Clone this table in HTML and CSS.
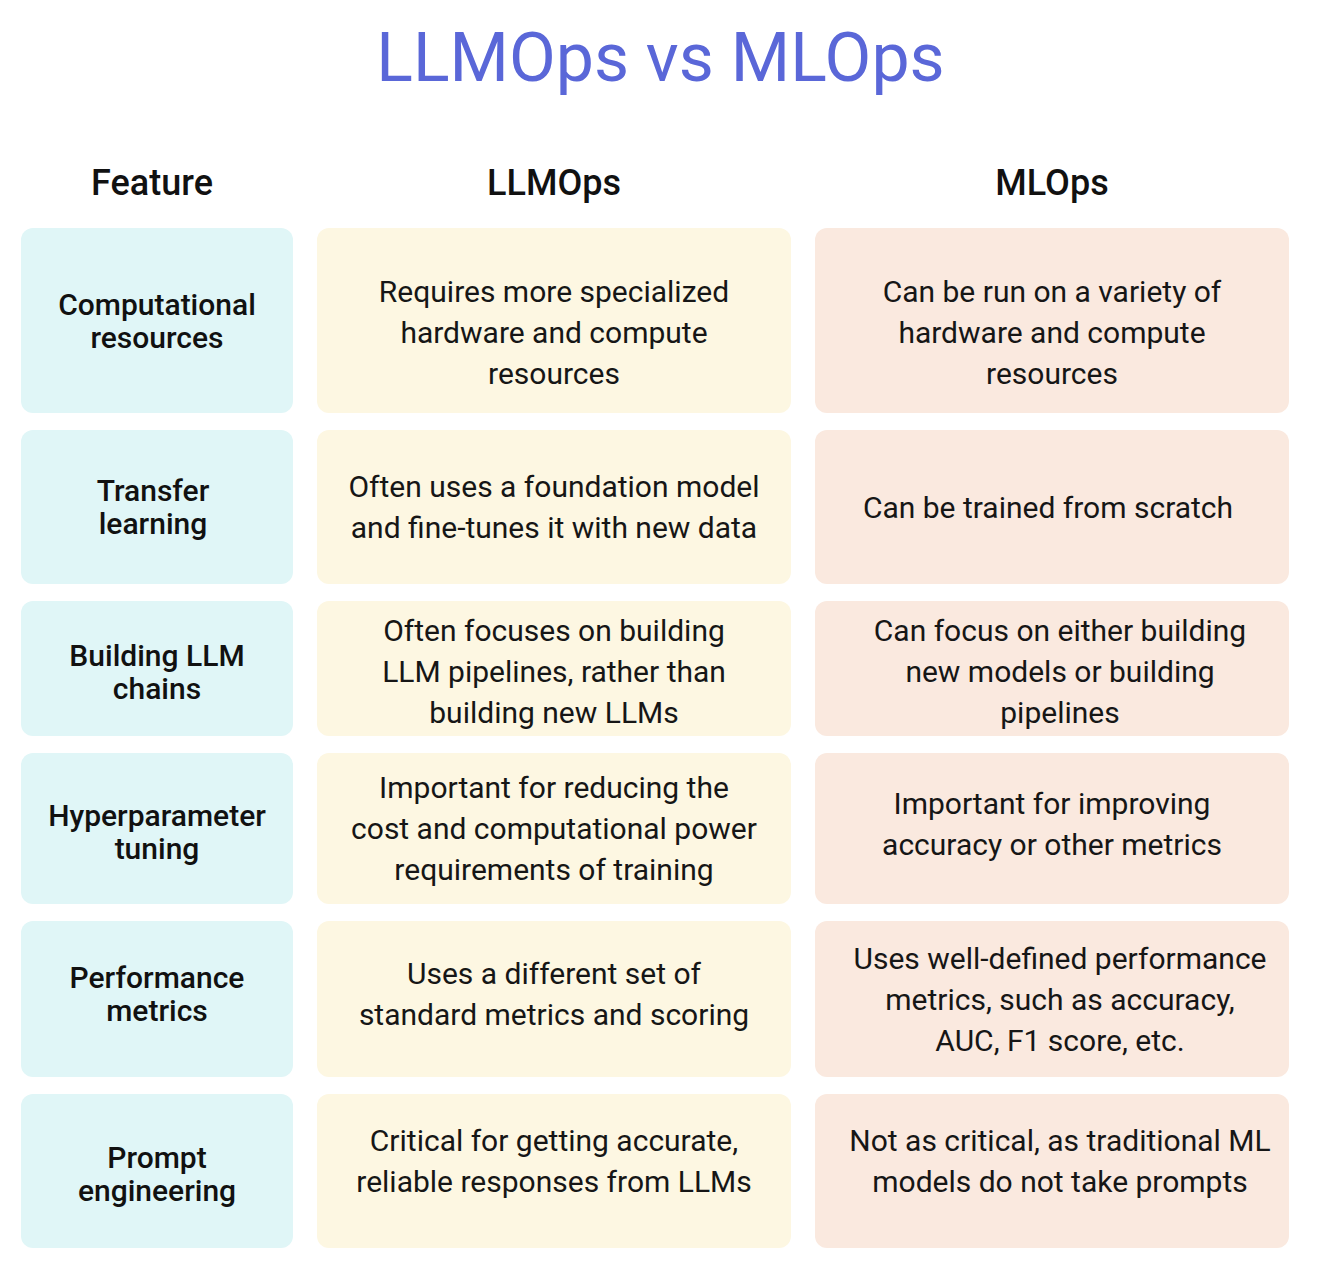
FILE: index.html
```html
<!DOCTYPE html>
<html lang="en">
<head>
<meta charset="utf-8">
<title>LLMOps vs MLOps</title>
<link rel="stylesheet" href="styles.css">
</head>
<body>
<main class="page">
  <h1 class="title">LLMOps vs MLOps</h1>
  <div class="heads">
    <div class="head head-feature">Feature</div>
    <div class="head">LLMOps</div>
    <div class="head">MLOps</div>
  </div>
  <div class="table">
    <div class="cell feature">Computational<br>resources</div>
    <div class="cell llm lower">Requires more specialized<br>hardware and compute<br>resources</div>
    <div class="cell ml lower">Can be run on a variety of<br>hardware and compute<br>resources</div>

    <div class="cell feature nudge-left">Transfer<br>learning</div>
    <div class="cell llm">Often uses a foundation model<br>and fine-tunes it with new data</div>
    <div class="cell ml nudge-left">Can be trained from scratch</div>

    <div class="cell feature nudge-down">Building LLM<br>chains</div>
    <div class="cell llm nudge-down">Often focuses on building<br>LLM pipelines, rather than<br>building new LLMs</div>
    <div class="cell ml nudge-down nudge-right">Can focus on either building<br>new models or building<br>pipelines</div>

    <div class="cell feature nudge-down">Hyperparameter<br>tuning</div>
    <div class="cell llm">Important for reducing the<br>cost and computational power<br>requirements of training</div>
    <div class="cell ml nudge-up">Important for improving<br>accuracy or other metrics</div>

    <div class="cell feature nudge-up">Performance<br>metrics</div>
    <div class="cell llm nudge-up">Uses a different set of<br>standard metrics and scoring</div>
    <div class="cell ml nudge-right">Uses well-defined performance<br>metrics, such as accuracy,<br>AUC, F1 score, etc.</div>

    <div class="cell feature nudge-down">Prompt<br>engineering</div>
    <div class="cell llm higher">Critical for getting accurate,<br>reliable responses from LLMs</div>
    <div class="cell ml higher nudge-right">Not as critical, as traditional ML<br>models do not take prompts</div>
  </div>
</main>
</body>
</html>
```

FILE: styles.css
```css
* { box-sizing: border-box; }

html, body {
  margin: 0;
  padding: 0;
  background: #ffffff;
}

body {
  font-family: Roboto, "Noto Sans", "Liberation Sans", sans-serif;
  color: #151515;
}

.page {
  width: 1318px;
  padding: 0 28px 0 21px;
}

.title {
  margin: 17px 0 0 0;
  padding-left: 10px;
  height: 82px;
  line-height: 82px;
  font-size: 68px;
  font-weight: 400;
  color: #5a67d8;
  text-align: center;
}

.heads,
.table {
  display: grid;
  grid-template-columns: 272px 474px 474px;
  column-gap: 24px;
}

.heads {
  margin-top: 61px;
  height: 46px;
  align-items: center;
}

.head {
  text-align: center;
  font-size: 36px;
  font-weight: 500;
  line-height: 46px;
  color: #111111;
}

.head-feature {
  padding-right: 10px;
}

.table {
  margin-top: 22px;
  grid-template-rows: 185px 154px 135px 151px 156px 154px;
  row-gap: 17px;
}

.cell {
  display: flex;
  align-items: center;
  justify-content: center;
  text-align: center;
  border-radius: 12px;
  font-size: 30px;
  line-height: 41px;
  font-weight: 400;
  color: #161616;
  white-space: nowrap;
}

.feature {
  background: #e0f6f7;
  font-weight: 500;
  font-size: 30px;
  line-height: 33px;
  color: #111111;
}

.llm {
  background: #fdf7e2;
}

.ml {
  background: #fae9df;
}

.lower {
  padding-top: 24px;
}

.higher {
  padding-bottom: 20px;
}

.nudge-down {
  padding-top: 6px;
}

.nudge-up {
  padding-bottom: 10px;
}

.nudge-right {
  padding-left: 16px;
}

.nudge-left {
  padding-right: 8px;
}
```
